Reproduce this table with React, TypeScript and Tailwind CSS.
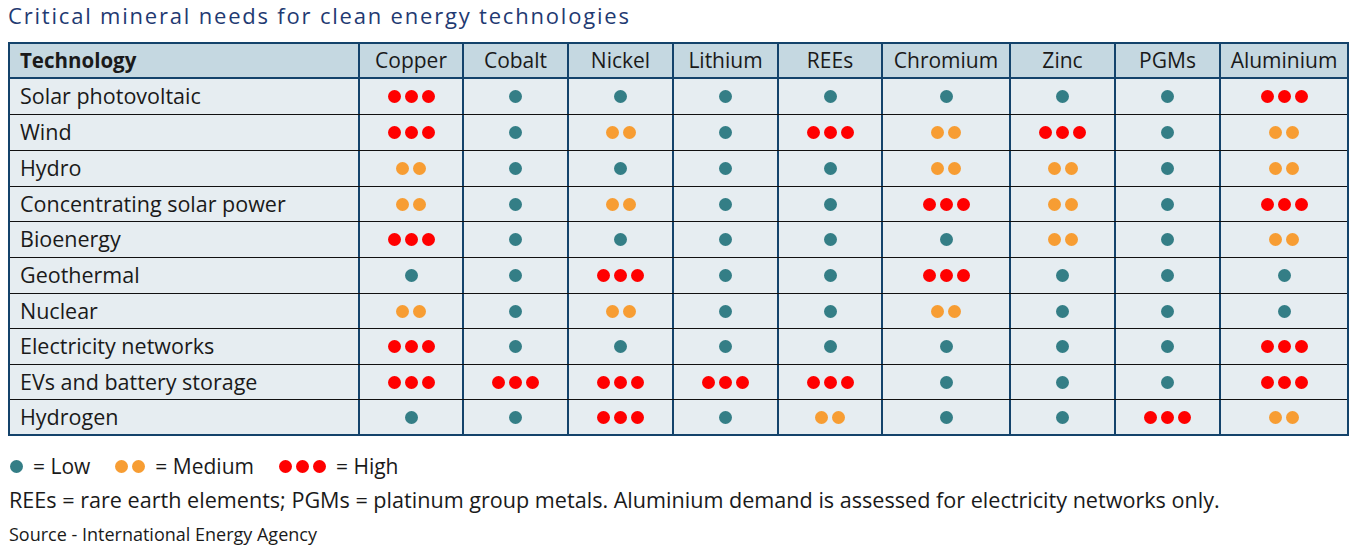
import React from "react";

const cols = ["Copper", "Cobalt", "Nickel", "Lithium", "REEs", "Chromium", "Zinc", "PGMs", "Aluminium"];
const colW = [
  "w-[104px] border-r-2",
  "w-[105px] border-r-2",
  "w-[105px] border-r-2",
  "w-[105px] border-r-2",
  "w-[104px] border-r-2",
  "w-[128px] border-r-2",
  "w-[105px] border-r-2",
  "w-[105px] border-r-2",
  "w-[126px]",
];

const rows: [string, number[], string][] = [
  ["Solar photovoltaic", [3, 1, 1, 1, 1, 1, 1, 1, 3], "h-[35px]"],
  ["Wind", [3, 1, 2, 1, 3, 2, 3, 1, 2], "h-[35px]"],
  ["Hydro", [2, 1, 1, 1, 1, 2, 2, 1, 2], "h-[35px]"],
  ["Concentrating solar power", [2, 1, 2, 1, 1, 3, 2, 1, 3], "h-[34px]"],
  ["Bioenergy", [3, 1, 1, 1, 1, 1, 2, 1, 2], "h-[35px]"],
  ["Geothermal", [1, 1, 3, 1, 1, 3, 1, 1, 1], "h-[35px]"],
  ["Nuclear", [2, 1, 2, 1, 1, 2, 1, 1, 1], "h-[34px]"],
  ["Electricity networks", [3, 1, 1, 1, 1, 1, 1, 1, 3], "h-[35px]"],
  ["EVs and battery storage", [3, 3, 3, 3, 3, 1, 1, 1, 3], "h-[34px]"],
  ["Hydrogen", [1, 1, 3, 1, 2, 1, 1, 3, 2], "h-[34px]"],
];

function Dot({ c }: { c: string }) {
  return <span className={`inline-block w-[13px] h-[13px] rounded-full ${c}`} />;
}

function Dots({ n }: { n: number }) {
  if (n === 1)
    return (
      <div className="flex gap-[4px]">
        <Dot c="bg-[#347e86]" />
      </div>
    );
  if (n === 2)
    return (
      <div className="flex gap-[4px]">
        <Dot c="bg-[#f79d33]" />
        <Dot c="bg-[#f79d33]" />
      </div>
    );
  return (
    <div className="flex gap-[4px]">
      <Dot c="bg-[#ff0000]" />
      <Dot c="bg-[#ff0000]" />
      <Dot c="bg-[#ff0000]" />
    </div>
  );
}

export default function App() {
  return (
    <div
      className="w-[1356px] h-[555px] bg-white overflow-hidden text-[#1a1a1a]"
      style={{ fontFamily: '"Open Sans", "Noto Sans", sans-serif' }}
    >
      <div className="pl-[8px] pt-[1px] h-[42px] text-[22px] leading-[28px] tracking-[1.8px] text-[#1f3a72]">
        Critical mineral needs for clean energy technologies
      </div>
      <div className="ml-[8px] w-[1341px] border-2 border-[#14436b] bg-[#e6edf1]">
        <div className="flex h-[33px] bg-[#c5d8e1] border-b-2 border-[#14436b] text-[21px] box-content">
          <div className="w-[350px] border-r-2 border-[#14436b] pl-[10px] flex items-center font-bold text-[20.5px]">
            Technology
          </div>
          {cols.map((c, i) => (
            <div key={c} className={`${colW[i]} border-[#14436b] flex items-center justify-center`}>
              {c}
            </div>
          ))}
        </div>
        {rows.map(([name, vals, h], ri) => (
          <div
            key={name}
            className={`flex ${h} text-[21.5px] box-content ${ri < rows.length - 1 ? "border-b border-[#111111]" : ""}`}
          >
            <div className="w-[350px] border-r-2 border-[#14436b] pl-[10px] flex items-center">{name}</div>
            {vals.map((v, i) => (
              <div key={i} className={`${colW[i]} border-[#14436b] flex items-center justify-center`}>
                <Dots n={v} />
              </div>
            ))}
          </div>
        ))}
      </div>
      <div className="pl-[10px] mt-[16px] flex items-center text-[21px] leading-[28px]">
        <Dot c="bg-[#347e86]" />
        <span className="ml-[10px]">= Low</span>
        <span className="ml-[25px] flex gap-[4px]">
          <Dot c="bg-[#f79d33]" />
          <Dot c="bg-[#f79d33]" />
        </span>
        <span className="ml-[10px]">= Medium</span>
        <span className="ml-[25px] flex gap-[4px]">
          <Dot c="bg-[#ff0000]" />
          <Dot c="bg-[#ff0000]" />
          <Dot c="bg-[#ff0000]" />
        </span>
        <span className="ml-[10px]">= High</span>
      </div>
      <div className="pl-[9px] mt-[6px] text-[21.6px] leading-[28px]">
        REEs = rare earth elements; PGMs = platinum group metals. Aluminium demand is assessed for electricity networks only.
      </div>
      <div className="pl-[9px] mt-[8px] text-[18px] leading-[24px]">Source - International Energy Agency</div>
    </div>
  );
}
